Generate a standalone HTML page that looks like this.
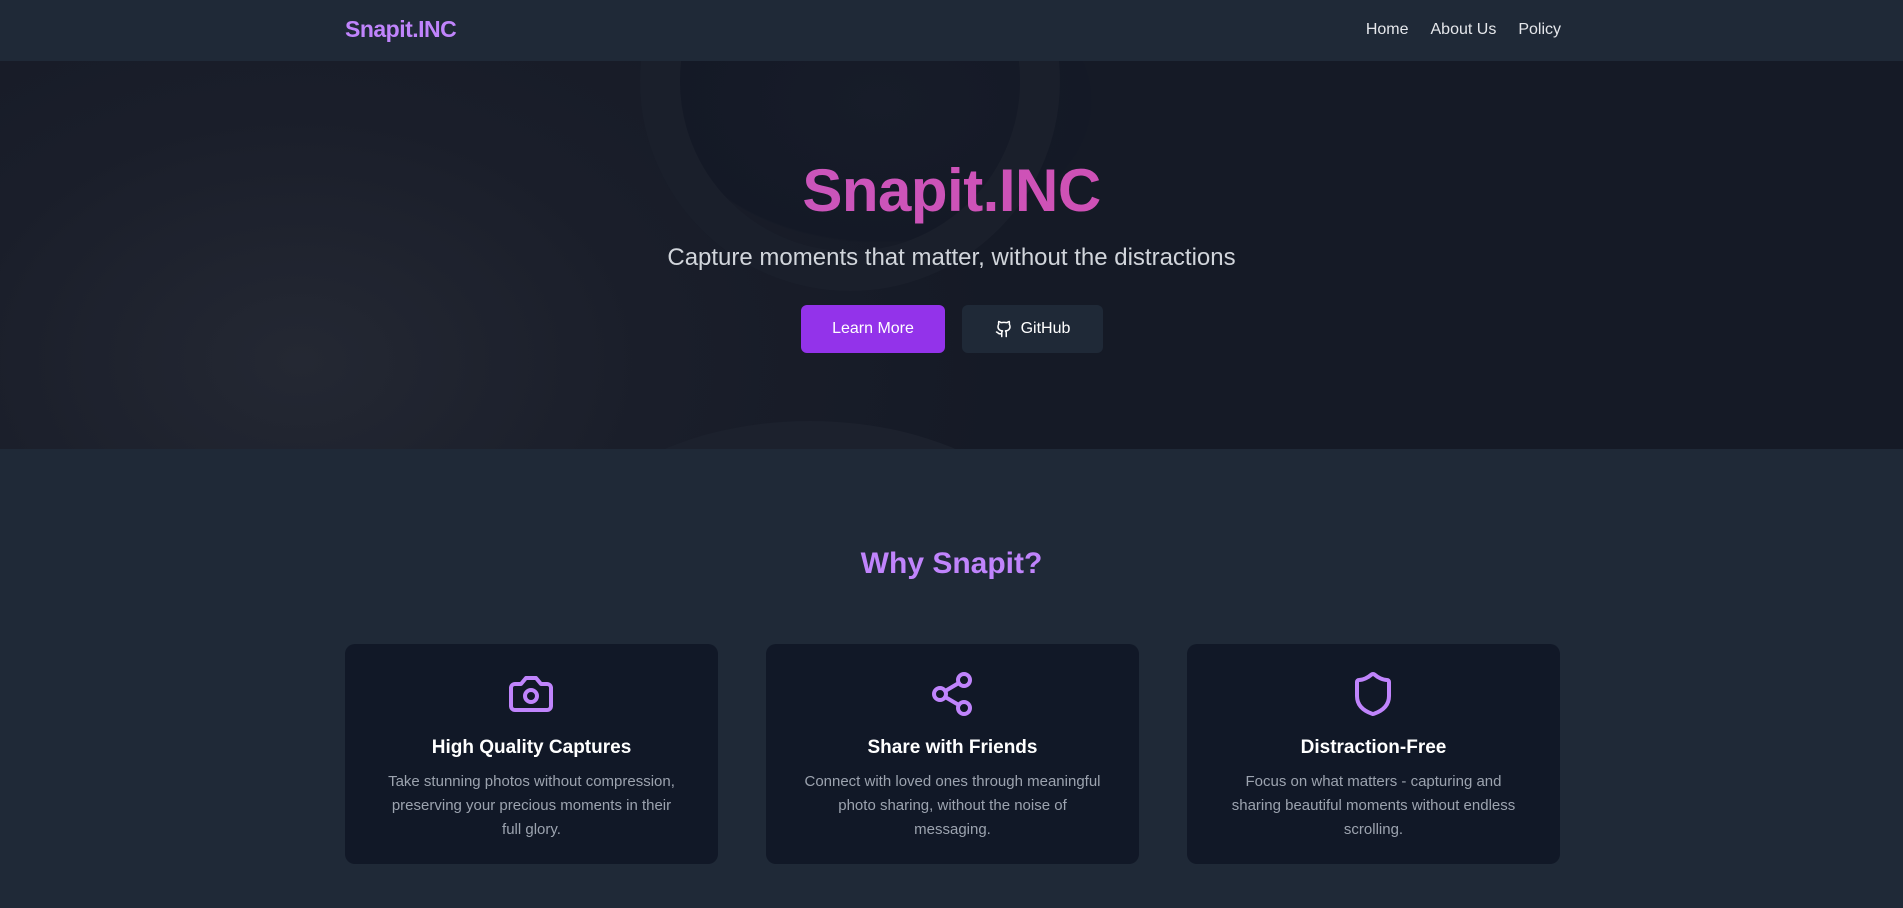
<!DOCTYPE html>
<html><head><meta charset="utf-8"><style>
*{margin:0;padding:0;box-sizing:border-box}
body{width:1903px;height:908px;overflow:hidden;background:#1f2937;font-family:"Liberation Sans",sans-serif;color:#fff}
nav{height:61px;background:#1f2937;position:relative}
.logo{position:absolute;left:345px;top:16px;font-size:23px;font-weight:bold;color:#c084fc;letter-spacing:-0.5px}
.links{position:absolute;right:342px;top:21px;font-size:16px;color:#e5e7eb}
.links span{margin-left:22px}
.hero{position:absolute;top:61px;left:0;width:1903px;height:388px;overflow:hidden;
background:radial-gradient(ellipse 300px 200px at 880px 40px,#171c29 0%,#141926 70%,transparent 71%),
radial-gradient(ellipse 700px 500px at 300px 300px,#242833 0%,#1a1e2a 50%,#151a26 100%);}
.ring{position:absolute;border-radius:50%;border:40px solid #1a1f2b}
h1{position:absolute;top:95px;width:100%;text-align:center;font-size:60px;font-weight:bold;
background:linear-gradient(90deg,#c060c8,#d946a8);-webkit-background-clip:text;color:transparent;letter-spacing:-0.5px}
.sub{position:absolute;top:183px;width:100%;text-align:center;font-size:24px;color:#d1d5db}
.btn{position:absolute;top:244px;height:48px;border-radius:6px;font-size:16px;display:flex;align-items:center;justify-content:center}
.b1{left:801px;width:144px;background:#9333ea}
.b2{left:962px;width:141px;background:#1f2937}
h2{position:absolute;top:547px;width:100%;text-align:center;font-size:30px;color:#c084fc;font-weight:bold}
.card{position:absolute;top:644px;width:373px;height:220px;background:#111827;border-radius:10px;text-align:center}
.card svg{position:absolute;left:162px;top:26px}
.card h3{position:absolute;top:93px;width:100%;font-size:19px;font-weight:bold}
.card p{position:absolute;top:126px;left:36px;right:36px;font-size:15px;line-height:24px;color:#9ca3af}
</style></head><body>
<nav><div class="logo">Snapit.INC</div><div class="links"><span>Home</span><span>About Us</span><span>Policy</span></div></nav>
<div class="hero">
<div class="ring" style="left:640px;top:-190px;width:420px;height:420px"></div>
<div class="ring" style="left:560px;top:360px;width:500px;height:300px;border-color:#1c212d"></div>
<h1>Snapit.INC</h1>
<div class="sub">Capture moments that matter, without the distractions</div>
<div class="btn b1">Learn More</div>
<div class="btn b2"><svg width="18" height="18" viewBox="0 0 24 24" fill="none" stroke="#fff" stroke-width="2" stroke-linecap="round" stroke-linejoin="round" style="margin-right:8px"><path d="M15 22v-4a4.8 4.8 0 0 0-1-3.5c3 0 6-2 6-5.5.08-1.25-.27-2.48-1-3.5.28-1.15.28-2.35 0-3.5 0 0-1 0-3 1.5-2.64-.5-5.36-.5-8 0C6 2 5 2 5 2c-.3 1.15-.3 2.35 0 3.5A5.4 5.4 0 0 0 4 9c0 3.5 3 5.5 6 5.5-.39.49-.68 1.05-.85 1.65S8.930 17.38 9 18v4"/><path d="M9 18c-4.51 2-5-2-7-2"/></svg>GitHub</div>
</div>
<h2>Why Snapit?</h2>
<div class="card" style="left:345px"><svg width="48" height="48" viewBox="0 0 24 24" fill="none" stroke="#c084fc" stroke-width="2" stroke-linecap="round" stroke-linejoin="round"><path d="M14.5 4h-5L7 7H4a2 2 0 0 0-2 2v9a2 2 0 0 0 2 2h16a2 2 0 0 0 2-2V9a2 2 0 0 0-2-2h-3l-2.5-3z"/><circle cx="12" cy="13" r="3"/></svg><h3>High Quality Captures</h3><p>Take stunning photos without compression, preserving your precious moments in their full glory.</p></div>
<div class="card" style="left:766px"><svg width="48" height="48" viewBox="0 0 24 24" fill="none" stroke="#c084fc" stroke-width="2" stroke-linecap="round" stroke-linejoin="round"><circle cx="18" cy="5" r="3"/><circle cx="6" cy="12" r="3"/><circle cx="18" cy="19" r="3"/><line x1="8.59" y1="13.51" x2="15.42" y2="17.49"/><line x1="15.41" y1="6.51" x2="8.59" y2="10.49"/></svg><h3>Share with Friends</h3><p>Connect with loved ones through meaningful photo sharing, without the noise of messaging.</p></div>
<div class="card" style="left:1187px"><svg width="48" height="48" viewBox="0 0 24 24" fill="none" stroke="#c084fc" stroke-width="2" stroke-linecap="round" stroke-linejoin="round"><path d="M20 13c0 5-3.5 7.5-7.66 8.95a1 1 0 0 1-.67-.01C7.5 20.5 4 18 4 13V6a1 1 0 0 1 1-1c2 0 4.5-1.2 6.24-2.72a1.17 1.17 0 0 1 1.52 0C14.51 3.81 17 5 19 5a1 1 0 0 1 1 1z"/></svg><h3>Distraction-Free</h3><p>Focus on what matters - capturing and sharing beautiful moments without endless scrolling.</p></div>
</body></html>
